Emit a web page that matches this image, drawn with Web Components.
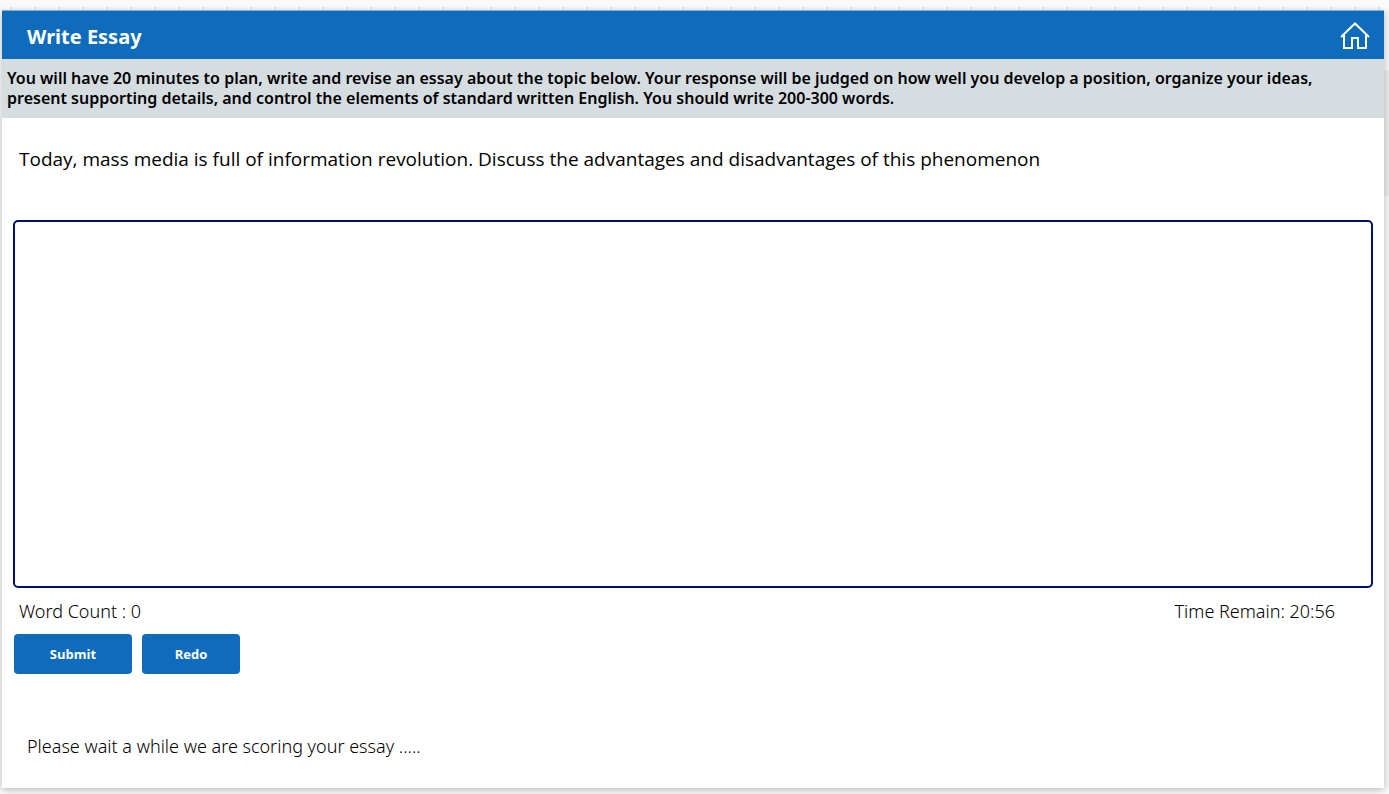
<!DOCTYPE html>
<html lang="en">
<head>
<meta charset="utf-8">
<title>Write Essay</title>
<style>
  html, body { height: 100%; }
  body { margin: 0; background: #fafafa; font-family: "Open Sans", sans-serif; color: #000; overflow: hidden; }
</style>
</head>
<body>
<essay-app>
  <essay-header slot="header">Write Essay</essay-header>
  <essay-instructions slot="header">You will have 20 minutes to plan, write and revise an essay about the topic below. Your response will be judged on how well you develop a position, organize your ideas, present supporting details, and control the elements of standard written English. You should write 200-300 words.</essay-instructions>
  <essay-editor>Today, mass media is full of information revolution. Discuss the advantages and disadvantages of this phenomenon</essay-editor>
  <essay-status>
    <span slot="count">Word Count : 0</span>
    <span slot="time">Time Remain: 20:56</span>
  </essay-status>
  <essay-actions></essay-actions>
  <essay-message slot="footer">Please wait a while we are scoring your essay .....</essay-message>
</essay-app>
<script>
  const define = (name, html) => customElements.define(name, class extends HTMLElement {
    constructor() {
      super();
      const template = document.createElement('template');
      template.innerHTML = html;
      this.attachShadow({ mode: 'open' }).append(template.content.cloneNode(true));
    }
  });

  define('essay-app', `
    <style>
      :host { box-sizing: border-box; display: grid; grid-template-columns: 1fr 5px; min-height: 100vh; padding: 10px 0 6px 2px;
        background: linear-gradient(90deg, #dedede 2px, transparent 2px) 10px 7px / 24px 2px repeat-x, #fafafa; }
      main { display: flex; flex-direction: column; background: #fff; box-shadow: 0 2px 7px rgba(0,0,0,.25); position: relative; }
      .body { flex: 1; display: flex; flex-direction: column; padding: 0 11px; }
      .rail { padding-top: 60px; background: #f6f6f6; }
      .thumb { height: 126px; background: #ebebeb; }
    </style>
    <main>
      <slot name="header"></slot>
      <div class="body"><slot></slot></div>
      <slot name="footer"></slot>
    </main>
    <div class="rail"><div class="thumb"></div></div>`);

  define('essay-header', `
    <style>
      :host { display: block; }
      header { box-sizing: border-box; display: flex; align-items: center; justify-content: space-between; height: 49px; padding: 3px 14px 0 25px; background: #0f6cbd; border-top: 1px solid #7fb0da; color: #fff; }
      h1 { margin: 0; font-family: "Noto Sans", sans-serif; font-size: 20px; line-height: 28px; font-weight: 700; }
      a { display: flex; color: inherit; }
      svg { display: block; }
    </style>
    <header>
      <h1><slot></slot></h1>
      <a href="#" aria-label="Home">
        <svg width="30" height="30" viewBox="0 0 30 30" fill="none" stroke="currentColor" stroke-width="2">
          <path d="M1 15 15 1.5 29 15M4 13V26H12V16H18V26H26V13"/>
        </svg>
      </a>
    </header>`);

  define('essay-instructions', `
    <style>
      :host { display: block; padding: 9px 48px 10px 5px; background: #d6dde0; font-family: "Noto Sans", sans-serif; font-size: 16px; font-weight: 600; line-height: 20px; }
      p { margin: 0; }
    </style>
    <p><slot></slot></p>`);

  define('essay-editor', `
    <style>
      :host { flex: 1; display: flex; flex-direction: column; }
      label { padding: 27px 6px 47px; font-size: 19px; line-height: 28px; }
      textarea { flex: 1; box-sizing: border-box; width: 100%; min-height: 120px; border: 2px solid #00126b; border-radius: 5px; background: #fff; resize: none; outline: none; font: 18px "Open Sans", sans-serif; }
    </style>
    <label for="essay"><slot></slot></label>
    <textarea id="essay"></textarea>`);

  define('essay-status', `
    <style>
      :host { display: flex; justify-content: space-between; padding: 11px 38px 11px 6px; font-family: "Noto Sans", sans-serif; font-size: 18px; font-weight: 300; line-height: 24px; }
    </style>
    <slot name="count"></slot><slot name="time"></slot>`);

  define('essay-actions', `
    <style>
      :host { display: flex; gap: 10px; padding-left: 1px; }
      button { height: 40px; padding: 0; border: 0; border-radius: 4px; background: #0f6cbd; color: #fff; font: 700 13px "Open Sans", sans-serif; }
      .submit { width: 118px; }
      .redo { width: 98px; }
    </style>
    <button class="submit" type="button">Submit</button>
    <button class="redo" type="button">Redo</button>`);

  define('essay-message', `
    <style>
      :host { display: block; padding: 60px 25px 30px; font-family: "Noto Sans", sans-serif; font-size: 18px; font-weight: 300; line-height: 24px; }
      p { margin: 0; }
    </style>
    <p role="status"><slot></slot></p>`);
</script>
</body>
</html>
